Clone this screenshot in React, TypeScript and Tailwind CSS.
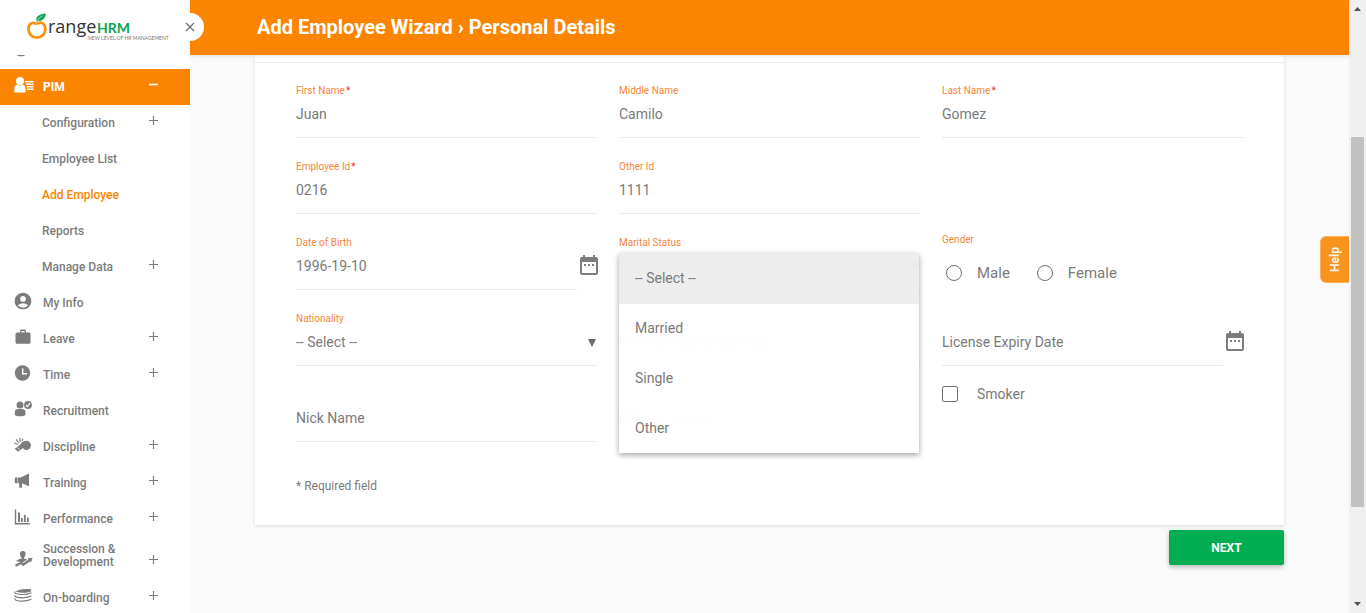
import { useState } from 'react';
import type { ReactNode } from 'react';
import { MdAccountCircle, MdDateRange, MdWork } from 'react-icons/md';

const svgBase = 'h-[18px] w-[18px]';

function PersonListIcon() {
  return (
    <svg viewBox="0 0 20 18" className="h-[18px] w-5" fill="currentColor" aria-hidden="true">
      <circle cx="6" cy="5" r="4" />
      <path d="M0.3 16.500V12.500C0.3 10 2 8.800 4 8.600L6 10l2-1.400c2 .2 3.600 1.400 3.600 3.900v3c0 .6-.4 1-1 1z" />
      <path d="M11 5h8.500v1.400H11zM12 7.500h7.500v1.400H12zM12.700 10h6.800v1.400h-6.800zM13 12.500h6.500v1.400H13z" />
    </svg>
  );
}

function ClockIcon() {
  return (
    <svg viewBox="0 0 18 18" className={svgBase} aria-hidden="true">
      <circle cx="8.500" cy="9" r="7.700" fill="currentColor" />
      <path d="M8.700 4.500V9.800H13" stroke="#fff" strokeWidth="1.500" fill="none" />
    </svg>
  );
}

function RecruitIcon() {
  return (
    <svg viewBox="0 0 18 18" className={svgBase} aria-hidden="true">
      <g fill="currentColor">
        <circle cx="6" cy="5" r="3.500" />
        <path d="M.8 14.200V12C.8 10 2.200 9 4 9h4.300c1.800 0 3.200 1 3.200 3v2.200c0 1.500-2 2-5.300 2s-5.400-.5-5.400-2z" />
        <circle cx="14" cy="5" r="3.900" />
      </g>
      <path d="M12 5.200l1.400 1.400 2.600-3.400" stroke="#fff" strokeWidth="1.200" fill="none" />
    </svg>
  );
}

function WhistleIcon() {
  return (
    <svg viewBox="0 0 18 18" className={svgBase} aria-hidden="true">
      <path
        d="M6.500 8.200C8 4.800 13 3.500 15.600 6c2.100 2.200 1.600 6-1 7.500-2 1.100-4 .6-5.600-1.500L4 15.800.8 12.800z"
        fill="currentColor"
      />
      <path d="M3.200 11.500l3 3" stroke="#fff" strokeWidth=".8" />
      <path d="M6.200 6L5.800 2M4.800 7L2 3.300M4 8.600L.4 7M8 5l1-2.500" stroke="currentColor" strokeWidth="1.100" />
    </svg>
  );
}

function MegaphoneIcon() {
  return (
    <svg viewBox="0 0 18 18" className={svgBase} fill="currentColor" aria-hidden="true">
      <path d="M15 1.500v12.800L8 11.200v4.500H5.200v-4.500H1.800c-.6 0-1-.4-1-1V6.500c0-.6.4-1 1-1H6.500z" />
      <path d="M3.500 5v6.500" stroke="#fff" strokeWidth=".5" />
    </svg>
  );
}

function ChartIcon() {
  return (
    <svg viewBox="0 0 18 18" className={svgBase} fill="currentColor" aria-hidden="true">
      <path d="M.8 1.500h1.400v13.600H16v1.400H.8z" />
      <path d="M4 4.500h2V14H4zM7 10h1.800v4H7zM9.900 7h1.900v7H9.900zM12.900 9.500h1.900V14h-1.900z" />
    </svg>
  );
}

function SuccessionIcon() {
  return (
    <svg viewBox="0 0 20 18" className="h-[18px] w-5" aria-hidden="true">
      <path
        d="M8.800 1c2.200 0 3 1.400 2.800 3.200-.1 1.500-.8 2.700-1.600 3.300v1l3.300 1.100-4.600 3L2.200 11c.6-1.300 3-1.700 5.400-2.500v-1C6.700 6.900 6.100 5.700 6 4.200 5.800 2.400 6.600 1 8.800 1z"
        fill="currentColor"
      />
      <path d="M1.500 15.800l5.700-3 2 2 7-5" stroke="currentColor" strokeWidth="2.300" fill="none" />
      <path d="M13.600 8.300l5-.6-1.600 4.700z" fill="currentColor" />
    </svg>
  );
}

function LayersIcon() {
  return (
    <svg viewBox="0 0 20 18" className="h-[18px] w-5" aria-hidden="true">
      <path d="M1.500 4.600C4 2.600 10 1.300 17.500 2.300c-1 .8-.8 1.300 0 2-3 1.600-10 2.300-16 .3z" fill="currentColor" />
      <path
        d="M1 4.500c-.4.700-.3 1.600.8 2 4.800 1.500 11 1 15.700-.8M1.200 8c-.4.700-.2 1.500.8 1.900 4.600 1.400 10.800.9 15.500-.9M1.200 11.300c-.4.700-.2 1.500.8 1.900 4.600 1.400 10.800.9 15.500-.9"
        stroke="currentColor"
        strokeWidth="1.100"
        fill="none"
      />
    </svg>
  );
}

function Toggle({ open = false }: { open?: boolean }) {
  return (
    <svg viewBox="0 0 9 9" className="mb-1.5 h-[9px] w-[9px]" aria-hidden="true">
      <path
        d={open ? 'M0 4.500H9' : 'M0 4.500H9M4.500 0V9'}
        stroke="currentColor"
        strokeWidth={open ? 1.600 : 1.200}
      />
    </svg>
  );
}

type Item = { label: string; icon?: ReactNode; toggle?: boolean; sub?: boolean; state?: 'open' | 'current'; tall?: boolean };

const items: Item[] = [
  { label: 'PIM', icon: <PersonListIcon />, toggle: true, state: 'open' },
  { label: 'Configuration', sub: true, toggle: true },
  { label: 'Employee List', sub: true },
  { label: 'Add Employee', sub: true, state: 'current' },
  { label: 'Reports', sub: true },
  { label: 'Manage Data', sub: true, toggle: true },
  { label: 'My Info', icon: <MdAccountCircle className="-ml-px h-5 w-5" /> },
  { label: 'Leave', icon: <MdWork className="h-[18px] w-[18px]" />, toggle: true },
  { label: 'Time', icon: <ClockIcon />, toggle: true },
  { label: 'Recruitment', icon: <RecruitIcon /> },
  { label: 'Discipline', icon: <WhistleIcon />, toggle: true },
  { label: 'Training', icon: <MegaphoneIcon />, toggle: true },
  { label: 'Performance', icon: <ChartIcon />, toggle: true },
  { label: 'Succession & Development', icon: <SuccessionIcon />, toggle: true, tall: true },
  { label: 'On-boarding', icon: <LayersIcon />, toggle: true },
];

function NavItem({ item }: { item: Item }) {
  const tone =
    item.state === 'open' ? 'bg-[#fb8500] text-white' : item.state === 'current' ? 'text-[#fb8500]' : 'text-[#7c7c7c]';
  return (
    <li>
      <a
        href="#"
        className={`flex items-center pr-8 text-xs font-medium ${item.tall ? 'h-[43px] leading-[13px]' : 'h-9'} ${item.sub ? 'pl-[42px]' : 'pl-3.5'} ${tone}`}
      >
        {item.icon && <span className={`w-[29px] shrink-0 ${item.tall ? '' : 'pb-1'}`}>{item.icon}</span>}
        <span className={`flex-1 ${item.tall ? 'pb-1.5' : ''} ${item.state === 'open' ? 'font-bold' : ''}`}>{item.label}</span>
        {item.toggle && (
          <span className={item.tall ? 'pt-2' : ''}>
            <Toggle open={item.state === 'open'} />
          </span>
        )}
      </a>
    </li>
  );
}

function Logo() {
  return (
    <svg viewBox="0 0 144 32" className="h-8 w-36" role="img" aria-label="OrangeHRM">
      <path d="M9.500 11.500C5 9.500 2.500 13 2.500 17.200c0 4.800 3.500 8.400 8.200 8.400s8.700-3.600 8.700-8.200c0-4.500-3-7.700-6.500-6.400" stroke="#f9930f" strokeWidth="2.800" fill="none" strokeLinecap="round" />
      <path d="M8.500 10.500c1.300 1.600 3.300 1.600 5 .5" stroke="#f9930f" strokeWidth="1.500" fill="none" />
      <path d="M10.500 9C9.500 4.500 13 2 20 1.500c-.6 4.500-3.300 8-8.200 7.200l-.6 2.300z" fill="#0aa653" />
      <path d="M11 8.800c1.500-2.200 3.200-3.700 5.500-5" stroke="#fff" strokeWidth=".6" fill="none" />
      <text x="22" y="21" fill="#333" fontSize="18" fontFamily="'Open Sans', sans-serif">range</text>
      <text x="71" y="21" fill="#0aa653" fontSize="14" fontWeight="700" fontFamily="Lato, sans-serif">HRM</text>
      <text x="62" y="28" fill="#777" fontSize="5" fontFamily="Lato, sans-serif">NEW LEVEL OF HR MANAGEMENT</text>
    </svg>
  );
}

const inputClass =
  'h-[41px] w-full min-w-0 appearance-none rounded-none border-b border-[#e9e9e9] bg-transparent pb-1.5 text-sm text-[#7a7a7a] outline-none placeholder:text-[#7a7a7a]';

type FieldProps = {
  id: string;
  label: string;
  value?: string;
  required?: boolean;
  floating?: boolean;
  date?: boolean;
  select?: string[];
};

function Field({ id, label, value = '', required, floating = true, date, select }: FieldProps) {
  return (
    <div className="h-[76px] pt-[22px]">
      <label htmlFor={id} className="block h-3 text-[10px] leading-3 text-[#f6863a]">
        {floating && label}
        {required && <span className="pl-px text-[#e8323c]">*</span>}
      </label>
      {select ? (
        <div className="relative">
          <select id={id} className={inputClass}>
            {select.map((o) => (
              <option key={o}>{o}</option>
            ))}
          </select>
          <svg viewBox="0 0 8 8" className="pointer-events-none absolute top-3.5 right-px h-2 w-2" aria-hidden="true">
            <path d="M0 0h8L4 8z" fill="#6d6d6d" />
          </svg>
        </div>
      ) : (
        <div className="flex items-start">
          <input
            id={id}
            type="text"
            aria-label={floating ? undefined : label}
            placeholder={floating ? undefined : label}
            defaultValue={value}
            className={inputClass}
          />
          {date && (
            <button type="button" aria-label={`${label} calendar`} className="-mr-1 pt-1 text-[#7d7d7d]">
              <MdDateRange className="h-6 w-6" />
            </button>
          )}
        </div>
      )}
    </div>
  );
}

const maritalOptions = ['-- Select --', 'Married', 'Single', 'Other'];

function MaritalStatus() {
  const [picked, setPicked] = useState('-- Select --');
  return (
    <div className="relative">
      <Field id="marital" label="Marital Status" select={maritalOptions} />
      <ul
        role="listbox"
        aria-label="Marital Status"
        className="absolute top-[38px] right-px left-0 z-10 text-sm text-[#7a7a7a] shadow-[0_2px_5px_rgba(0,0,0,0.26),0_2px_8px_rgba(0,0,0,0.12)]"
      >
        {maritalOptions.map((o) => (
          <li
            key={o}
            role="option"
            aria-selected={o === picked}
            onClick={() => setPicked(o)}
            className={`flex h-[50px] items-center px-4 pb-0.5 first:h-[51px] last:h-[49px] ${o === picked ? 'bg-[#ededed]/98' : 'bg-white/98'}`}
          >
            {o}
          </li>
        ))}
      </ul>
    </div>
  );
}

export default function App() {
  return (
    <div className="flex h-screen overflow-hidden bg-[#fafafa] font-['Roboto',sans-serif]">
      <aside className="w-[190px] shrink-0 overflow-hidden bg-white">
        <div className="flex h-[55px] items-center pl-[26px]">
          <Logo />
        </div>
        <div className="h-3.5 overflow-hidden pl-[11px] text-[#777]">
          <MdAccountCircle className="-mt-[17px] h-5 w-5" />
        </div>
        <ul>
          {items.map((i) => (
            <NavItem key={i.label} item={i} />
          ))}
        </ul>
      </aside>

      <div className="min-w-0 flex-1">
        <header className="relative z-20 flex h-[55px] items-center bg-[#fb8500] pb-0.5 pl-[67px] shadow-[0_1px_4px_rgba(0,0,0,0.12)]">
          <button
            type="button"
            aria-label="Close menu"
            className="absolute top-[13px] -left-3.5 flex h-7 w-7 items-center justify-center rounded-full bg-white"
          >
            <svg viewBox="0 0 10 10" className="h-2.5 w-2.5" aria-hidden="true">
              <path d="M1 1l8 8M9 1l-8 8" stroke="#707070" strokeWidth="1.300" />
            </svg>
          </button>
          <h1 className="text-xl font-bold text-white">Add Employee Wizard › Personal Details</h1>
        </header>

        <form className="mx-[65px]">
          <div className="bg-white shadow-[0_1px_4px_rgba(0,0,0,0.12)]">
            <div className="h-2 border-b border-[#ececec]" />
            <div className="grid grid-cols-3 gap-x-[22px] px-[41px]">
              <Field id="first" label="First Name" value="Juan" required />
              <Field id="middle" label="Middle Name" value="Camilo" />
              <Field id="last" label="Last Name" value="Gomez" required />

              <Field id="employee-id" label="Employee Id" value="0216" required />
              <Field id="other-id" label="Other Id" value="1111" />
              <div />

              <Field id="dob" label="Date of Birth" value="1996-19-10" date />
              <MaritalStatus />
              <fieldset className="pt-[19px]">
                <legend className="float-left w-full text-[10px] leading-3 text-[#f6863a]">Gender</legend>
                <div className="flex gap-[27px] pt-[17px] pl-1 text-[15px] leading-5 text-[#7a7a7a]">
                  {['Male', 'Female'].map((g) => (
                    <label key={g} className="flex items-center gap-[15px]">
                      <input
                        type="radio"
                        name="gender"
                        className="h-4 w-4 appearance-none rounded-full border border-[#6f6f6f] checked:border-4"
                      />
                      {g}
                    </label>
                  ))}
                </div>
              </fieldset>

              <Field id="nationality" label="Nationality" select={['-- Select --']} />
              <Field id="license" label="Driver's License Number" floating={false} />
              <Field id="expiry" label="License Expiry Date" floating={false} date />

              <Field id="nick" label="Nick Name" floating={false} />
              <Field id="military" label="Military Service" floating={false} />
              <div className="pt-[17px]">
                <label className="flex items-center gap-[19px] text-sm text-[#7a7a7a]">
                  <input
                    type="checkbox"
                    className="h-4 w-4 appearance-none rounded-xs border border-[#6f6f6f] checked:bg-[#fb8500]"
                  />
                  Smoker
                </label>
              </div>
            </div>
            <p className="px-[41px] pt-[35px] pb-[31px] text-xs text-[#7a7a7a]">* Required field</p>
          </div>
          <div className="flex justify-end pt-[5px]">
            <button
              type="submit"
              className="h-[35px] w-[115px] rounded-xs bg-[#00ad50] text-xs font-bold text-white shadow-[0_2px_5px_rgba(0,0,0,0.26)]"
            >
              NEXT
            </button>
          </div>
        </form>
      </div>

      <div className="flex w-[17px] shrink-0 flex-col items-center bg-[#f0f0f0]" aria-hidden="true">
        <svg viewBox="0 0 17 17" className="h-[17px] w-[17px]">
          <path d="M5 11h7L8.500 7z" fill="#505050" />
        </svg>
        <div className="flex w-[13px] flex-1 flex-col">
          <div className="flex-[120]" />
          <div className="flex-[370] bg-[#c1c1c1]" />
          <div className="flex-[89]" />
        </div>
        <svg viewBox="0 0 17 17" className="h-[17px] w-[17px]">
          <path d="M5 6h7l-3.500 4z" fill="#505050" />
        </svg>
      </div>

      <button
        type="button"
        className="fixed top-[236px] right-[17px] flex h-[47px] w-[29px] items-center justify-center rounded-l-md border border-r-0 border-[#fbb05c] bg-[#f8931d] text-xs font-bold text-[#fff3e2]"
      >
        <span className="rotate-180 [writing-mode:vertical-rl]">Help</span>
      </button>
    </div>
  );
}
